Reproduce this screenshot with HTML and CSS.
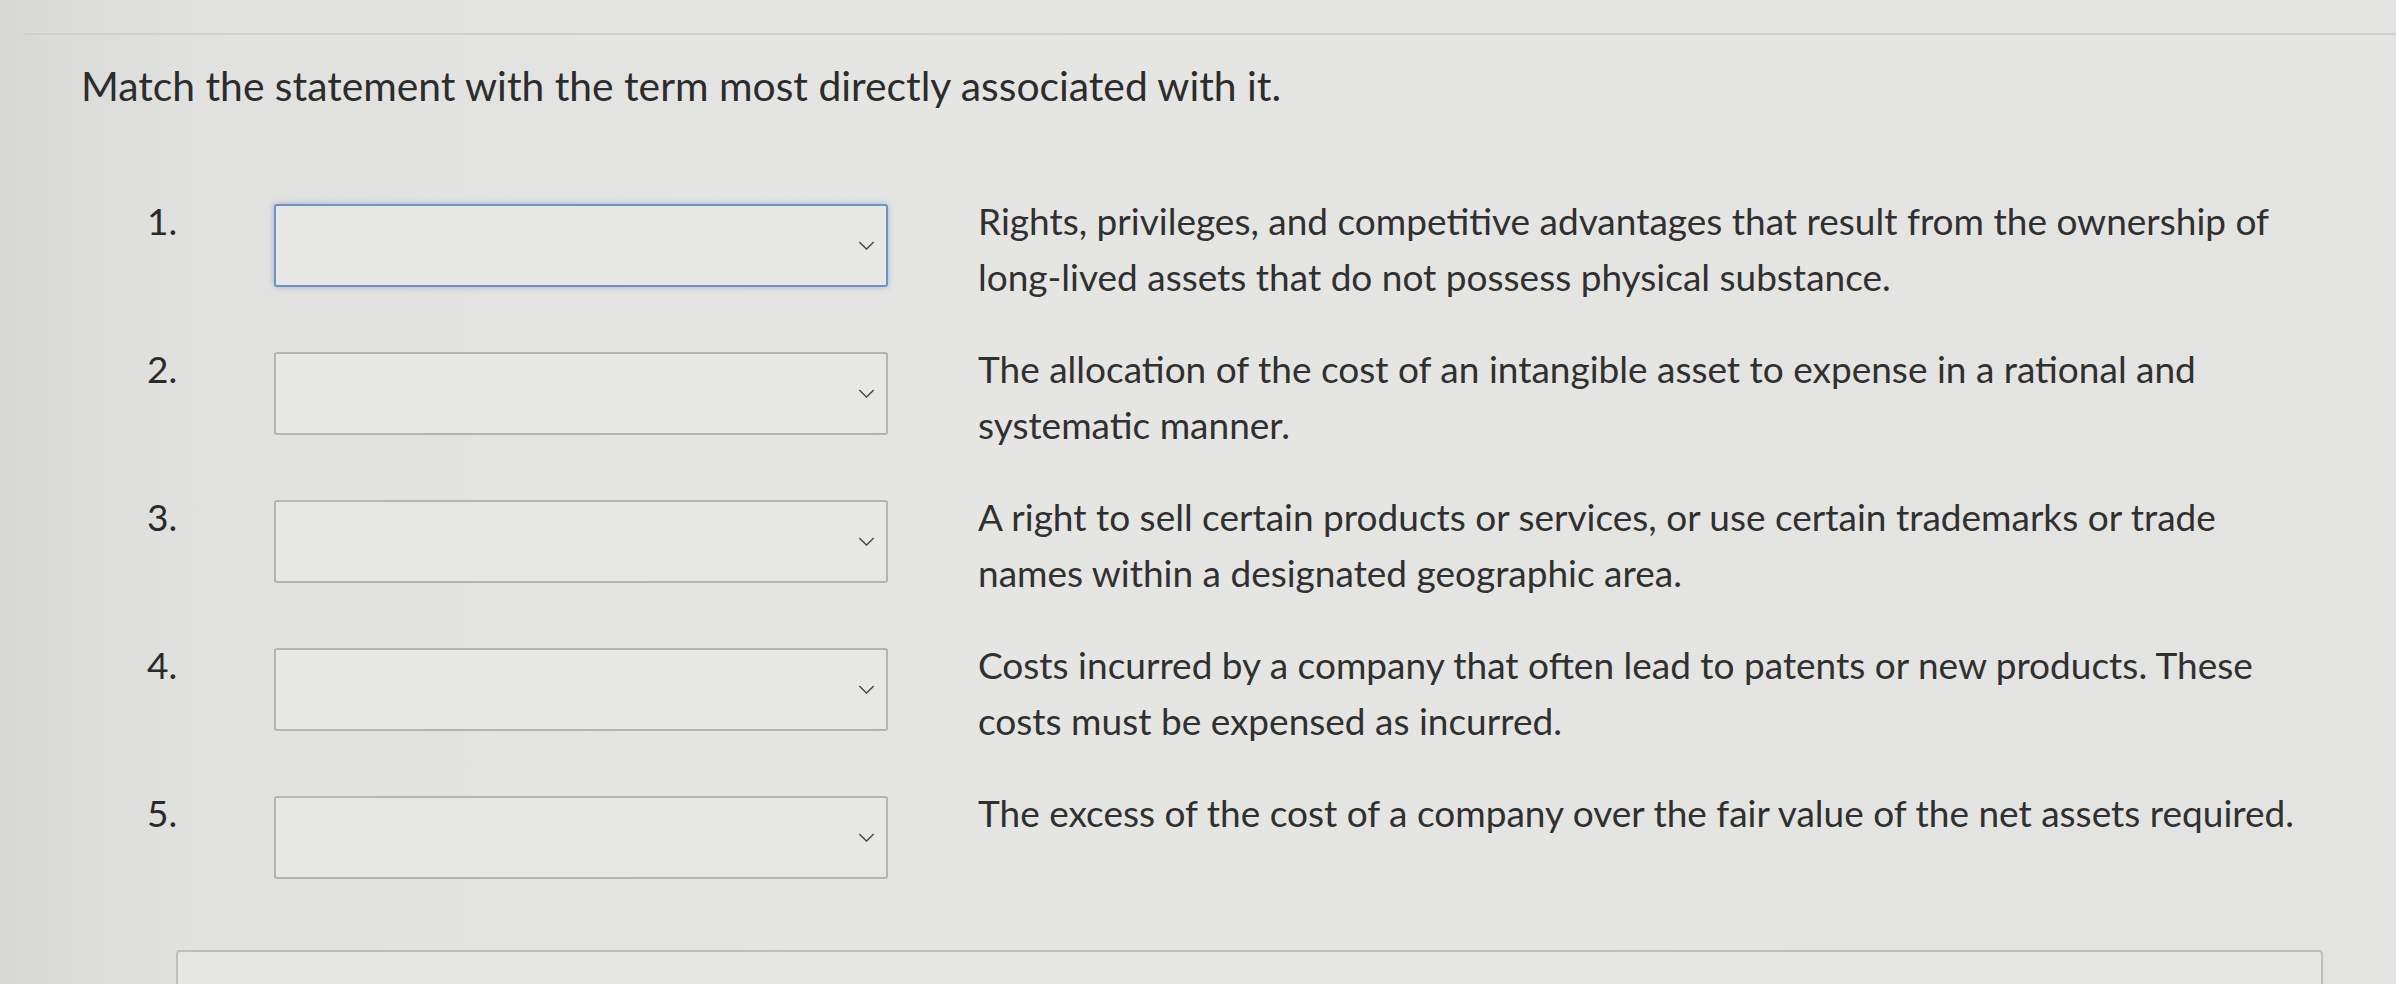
FILE: index.html
```html
<!DOCTYPE html>
<html>
<head>
    <title>Matching</title>
    <link rel="stylesheet" href="styles.css">
</head>
<body>
    <div class="page">
        <div class="rule"></div>
        <h1 class="prompt">Match the statement with the term most directly associated with it.</h1>

        <div class="items">
            <div class="item">
                <div class="num">1.</div>
                <div class="dropdown focused">
                    <svg class="chevron" viewBox="0 0 18 10"><polyline points="1,1 9,9 17,1"/></svg>
                </div>
                <div class="text">Rights, privileges, and competitive advantages that result from the ownership of long-lived assets that do not possess physical substance.</div>
            </div>
            <div class="item">
                <div class="num">2.</div>
                <div class="dropdown">
                    <svg class="chevron" viewBox="0 0 18 10"><polyline points="1,1 9,9 17,1"/></svg>
                </div>
                <div class="text">The allocation of the cost of an intangible asset to expense in a rational and systematic manner.</div>
            </div>
            <div class="item">
                <div class="num">3.</div>
                <div class="dropdown">
                    <svg class="chevron" viewBox="0 0 18 10"><polyline points="1,1 9,9 17,1"/></svg>
                </div>
                <div class="text">A right to sell certain products or services, or use certain trademarks or trade names within a designated geographic area.</div>
            </div>
            <div class="item">
                <div class="num">4.</div>
                <div class="dropdown">
                    <svg class="chevron" viewBox="0 0 18 10"><polyline points="1,1 9,9 17,1"/></svg>
                </div>
                <div class="text">Costs incurred by a company that often lead to patents or new products. These costs must be expensed as incurred.</div>
            </div>
            <div class="item">
                <div class="num">5.</div>
                <div class="dropdown">
                    <svg class="chevron" viewBox="0 0 18 10"><polyline points="1,1 9,9 17,1"/></svg>
                </div>
                <div class="text">The excess of the cost of a company over the fair value of the net assets required.</div>
            </div>
        </div>

        <div class="answer-panel"></div>
    </div>
</body>
</html>
```

FILE: styles.css
```css
html, body {
    margin: 0;
    height: 100%;
    overflow: hidden;
}
body {
    font-family: Lato, "Open Sans", sans-serif;
    color: #303030;
    background: linear-gradient(90deg, #d8d8d6 0%, #e1e1df 8%, #e5e5e3 40%, #e3e3e1 100%);
}
.page {
    padding-top: 33px;
}
.rule {
    margin-left: 23px;
    border-top: 2px solid #d0d0ce;
}
.prompt {
    margin: 26px 0 0 81px;
    font-size: 40.8px;
    line-height: 50px;
    font-weight: 400;
    color: #2c2c2c;
}
.items {
    margin: 82px 0 0 147px;
    display: flex;
    flex-direction: column;
    gap: 36px;
}
.item {
    display: grid;
    grid-template-columns: 127px 614px auto;
    align-items: start;
}
.num {
    font-size: 37px;
    line-height: 56px;
    color: #2a2a2a;
}
.dropdown {
    margin-top: 11px;
    height: 83px;
    box-sizing: border-box;
    border: 2px solid #b4b4b2;
    border-radius: 3px;
    background: #e7e7e5;
    display: flex;
    align-items: center;
    justify-content: flex-end;
    padding-right: 11px;
}
.dropdown.focused {
    border-color: #7093c6;
    box-shadow: 0 0 6px rgba(96, 140, 205, 0.55);
}
.chevron {
    width: 17px;
    height: 9px;
    fill: none;
    stroke: #4a4a4a;
    stroke-width: 1.6;
}
.text {
    margin-left: 90px;
    width: 1330px;
    font-size: 37px;
    line-height: 56px;
}
.answer-panel {
    margin: 71px 73px 0 176px;
    height: 200px;
    border: 2px solid #bdbdbb;
    border-radius: 4px;
    background: #e6e6e4;
}
```
